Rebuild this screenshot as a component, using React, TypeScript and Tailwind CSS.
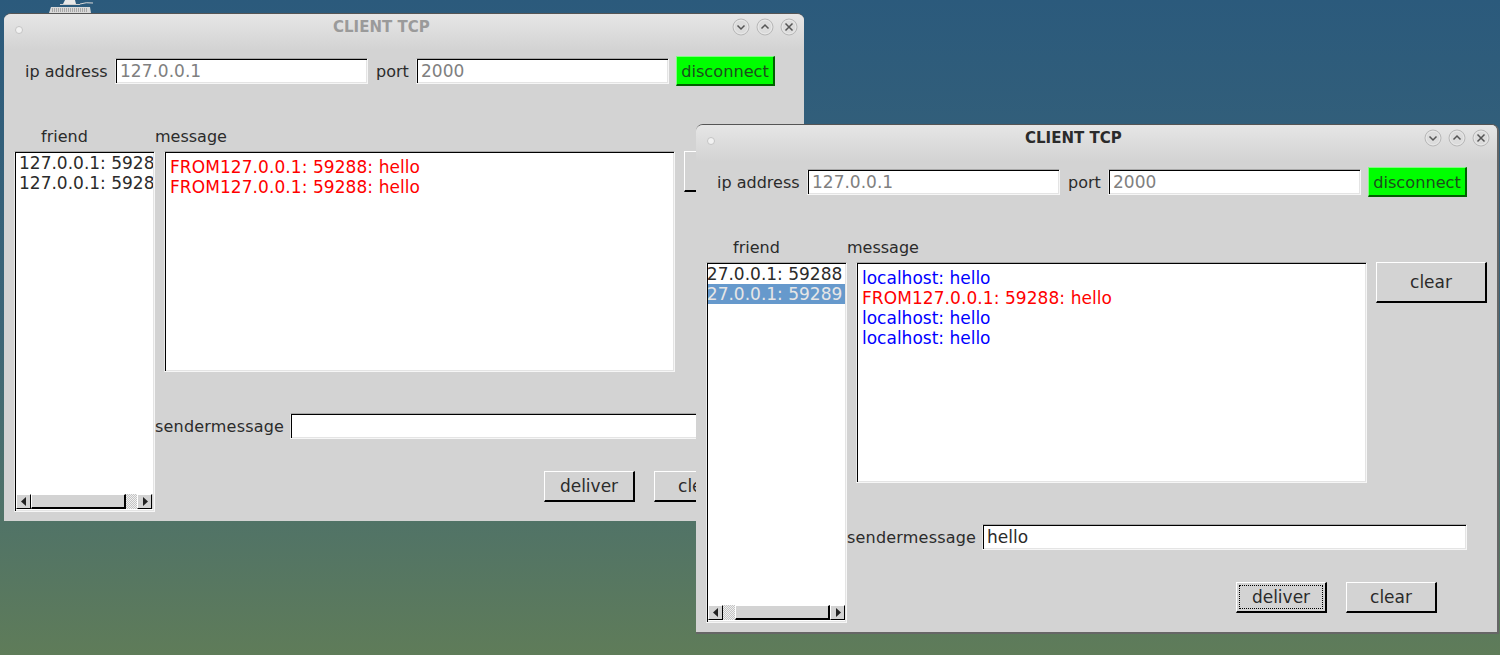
import React from "react";

const sunken =
  "border border-t-[#a8a8a8] border-l-[#e8e8e8] border-r-[#f6f6f6] border-b-[#f6f6f6] shadow-[inset_1px_1px_0_#000,inset_-1px_-1px_0_#e4e4e4]";

function WinBtn({ kind }: { kind: "down" | "up" | "x" }) {
  return (
    <svg width="18" height="18" viewBox="0 0 18 18" className="block">
      <circle cx="9" cy="9" r="8" fill="#d8d8d8" stroke="#b8b8b8" strokeWidth="1" />
      <circle cx="9" cy="9" r="6.8" fill="#dcdcdc" stroke="#e8e8e8" strokeWidth="1" />
      {kind === "down" && <path d="M5.5 7.5 L9 11 L12.5 7.5" fill="none" stroke="#555" strokeWidth="1.5" />}
      {kind === "up" && <path d="M5.5 10.5 L9 7 L12.5 10.5" fill="none" stroke="#555" strokeWidth="1.5" />}
      {kind === "x" && <path d="M5.5 5.5 L12.5 12.5 M12.5 5.5 L5.5 12.5" fill="none" stroke="#555" strokeWidth="1.5" />}
    </svg>
  );
}

function TkButton({ label, focus, w }: { label: string; focus?: boolean; w: string }) {
  return (
    <div className={`${w} h-[31px] border border-t-white border-l-white border-r-2 border-b-2 border-r-black border-b-black p-[2px]`}>
      <div className={`w-full h-full flex items-center justify-center ${focus ? "border border-dotted border-black" : ""}`}>{label}</div>
    </div>
  );
}

function Arrow({ dir }: { dir: "l" | "r" }) {
  return (
    <div className="w-[15px] h-[15px] border-t border-l border-t-white border-l-white border-r border-b border-r-black border-b-black flex items-center justify-center shrink-0">
      <svg width="6" height="9" viewBox="0 0 6 9">
        <path d={dir === "l" ? "M5 0 L5 9 L0 4.5 Z" : "M1 0 L1 9 L6 4.5 Z"} fill="#222" />
      </svg>
    </div>
  );
}

function Stipple({ w }: { w: string }) {
  return <div className={`${w} h-[15px] bg-[repeating-conic-gradient(#c4c4c4_0_25%,#f0f0f0_0_50%)] bg-[length:2px_2px] shrink-0`} />;
}

function Thumb() {
  return <div className="w-[95px] h-[15px] border-t border-l border-t-white border-l-white border-r-2 border-b-2 border-r-black border-b-black shrink-0" />;
}

function ClientWindow({
  pos,
  active,
  scrolled,
  messages,
  sender,
  rows,
}: {
  pos: string;
  active: boolean;
  scrolled: boolean;
  messages: { t: string; blue?: boolean }[];
  sender: string;
  rows: { t: string; sel?: boolean }[];
}) {
  return (
    <div
      className={`absolute ${pos} rounded-t-[7px] overflow-hidden bg-[#d3d3d3] text-[#2b2b2b] text-[17px] leading-[20px] font-['DejaVu_Sans',sans-serif] flex flex-col border-t border-t-[#555] ${
        active ? "w-[803px] h-[510px] border-r-2 border-b-2 border-r-[#666] border-b-[#666]" : "w-[800px] h-[508px]"
      }`}
    >
      <div className="h-[36px] shrink-0 bg-gradient-to-b from-[#e6e6e6] to-[#d3d3d3] relative flex pl-[329px] pt-[3px]">
        <div className="absolute left-[11px] top-[12px] w-[8px] h-[8px] rounded-full bg-[#f2f2f2] border border-[#c4c4c4]" />
        <span className={`font-bold text-[15px] ${active ? "text-[#2b2b2b]" : "text-[#9a9a9a]"}`}>CLIENT TCP</span>
        <div className="absolute left-[728px] top-[4px] flex gap-[6px]">
          <WinBtn kind="down" />
          <WinBtn kind="up" />
          <WinBtn kind="x" />
        </div>
      </div>

      <div className="flex items-center pl-[21px] h-[30px] mt-[6px] shrink-0">
        <span className="w-[90px] text-[16px] pt-[2px]">ip address</span>
        <div className={`${sunken} w-[253px] h-[26px] bg-white text-[#808080] pl-[4px] flex items-center`}>127.0.0.1</div>
        <span className="ml-[8px] w-[40px] text-[16px] pt-[2px]">port</span>
        <div className={`${sunken} w-[253px] h-[26px] bg-white text-[#808080] pl-[4px] flex items-center`}>2000</div>
        <div className="ml-[7px] w-[99px] h-[30px] pt-[2px] text-[16.2px] text-[#1c4c1c] bg-[#00ff00] border border-t-[#7fff7f] border-l-[#7fff7f] border-r-2 border-b-2 border-r-[#006000] border-b-[#006000] flex items-center justify-center">
          disconnect
        </div>
      </div>

      <div className="flex pl-[10px] mt-[39px] flex-1 min-h-0">
        <div className="w-[141px] shrink-0">
          <div className="h-[26px] pl-[27px] pt-[2px] text-[16px]">friend</div>
          <div className={`${sunken} h-[361px] bg-white flex flex-col p-[1px]`}>
            <div className="flex-1 overflow-hidden">
              {rows.map((r, i) => (
                <div key={i} className={`whitespace-nowrap h-[20px] ${r.sel ? "bg-[#6699cc] text-[#e6e6e6]" : ""}`}>
                  <span className={scrolled ? "-ml-[12px]" : "ml-[3px]"}>{r.t}</span>
                </div>
              ))}
            </div>
            <div className="flex h-[15px] bg-[#d3d3d3] mb-[1px]">
              <Arrow dir="l" />
              {scrolled ? <Stipple w="w-[12px]" /> : null}
              <Thumb />
              {scrolled ? null : <Stipple w="w-[11px]" />}
              <Arrow dir="r" />
            </div>
          </div>
        </div>

        <div className="ml-[9px] flex-1 min-w-0">
          <div className="h-[26px] -ml-[9px] pt-[2px] text-[16px]">message</div>
          <div className="flex">
            <div className={`${sunken} w-[511px] h-[221px] bg-white pl-[5px] pt-[5px] shrink-0`}>
              {messages.map((m, i) => (
                <div key={i} className={`whitespace-nowrap ${m.blue ? "text-[#0000ff]" : "text-[#ff0000] tracking-[0.07px]"}`}>
                  {m.t}
                </div>
              ))}
            </div>
            <div className="ml-[9px]">
              <div className="w-[111px] h-[41px] border border-t-white border-l-white border-r-2 border-b-2 border-r-black border-b-black flex items-center justify-center">
                clear
              </div>
            </div>
          </div>
          <div className="flex items-center h-[26px] mt-[41px] -ml-[9px]">
            <span className="w-[135px] shrink-0 text-[16px] tracking-[0.2px] pt-[2px]">sendermessage</span>
            <div className={`${sunken} w-[485px] h-[26px] bg-white pl-[4px] flex items-center`}>{sender}</div>
          </div>
          <div className="flex mt-[32px] ml-[380px] gap-[19px]">
            <TkButton label="deliver" w="w-[91px]" focus={active} />
            <TkButton label="clear" w="w-[91px]" />
          </div>
        </div>
      </div>
    </div>
  );
}

export default function App() {
  return (
    <div className="relative w-[1500px] h-[655px] overflow-hidden bg-gradient-to-b from-[#2b5a7c] via-[#3c6577] to-[#5f7c59]">
      <svg width="46" height="14" viewBox="0 0 46 14" className="absolute left-[48px] top-0">
        <path d="M17 0 H27 L28 4 H15 Z" fill="#e8e8e8" />
        <path d="M12 4.5 H32" stroke="#cfcfcf" strokeWidth="1" />
        <path d="M32 4 Q38 2 45 3" stroke="#d8d8d8" strokeWidth="1" fill="none" />
        <path d="M3 7 H42 L43 13 H1 Z" fill="#d9d9d9" />
        <path d="M4 9 H40 M4 11 H40" stroke="#777" strokeWidth="1" strokeDasharray="1 1" />
      </svg>
      <ClientWindow
        pos="left-[4px] top-[13px] z-0"
        active={false}
        scrolled={false}
        sender=""
        rows={[{ t: "127.0.0.1: 59288" }, { t: "127.0.0.1: 59288" }]}
        messages={[{ t: "FROM127.0.0.1: 59288: hello" }, { t: "FROM127.0.0.1: 59288: hello" }]}
      />
      <ClientWindow
        pos="left-[696px] top-[124px] z-10"
        active
        scrolled
        sender="hello"
        rows={[{ t: "127.0.0.1: 59288" }, { t: "127.0.0.1: 59289", sel: true }]}
        messages={[
          { t: "localhost: hello", blue: true },
          { t: "FROM127.0.0.1: 59288: hello" },
          { t: "localhost: hello", blue: true },
          { t: "localhost: hello", blue: true },
        ]}
      />
    </div>
  );
}
